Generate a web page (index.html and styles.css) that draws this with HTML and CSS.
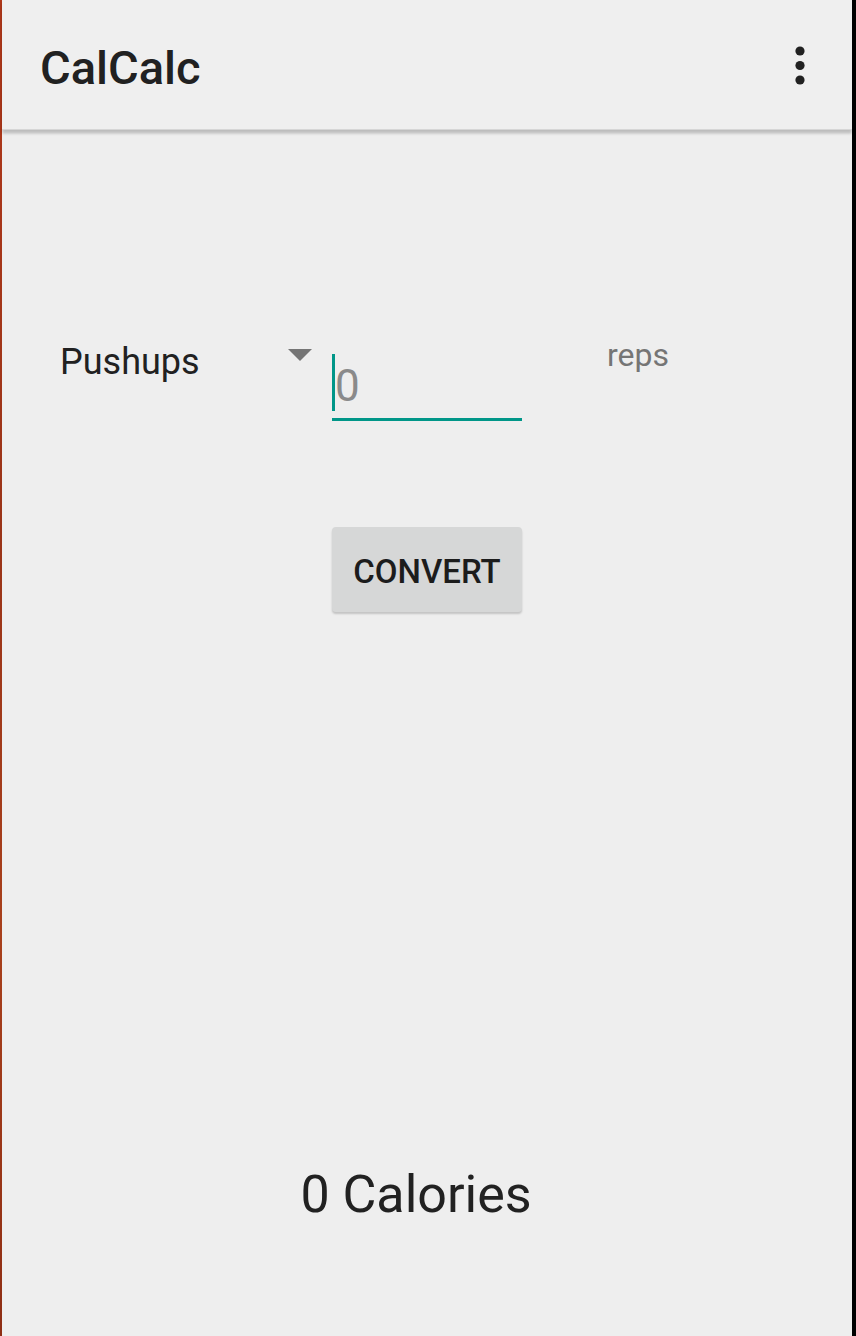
FILE: index.html
```html
<!DOCTYPE html>
<html lang="en">
<head>
<meta charset="utf-8">
<title>CalCalc</title>
<link rel="stylesheet" href="styles.css">
</head>
<body>
<div class="frame">
  <div class="edge-left"></div>
  <main class="screen">
    <header class="appbar">
      <h1 class="title">CalCalc</h1>
      <svg class="overflow" width="10" height="40" viewBox="0 0 10 40" aria-label="More options">
        <circle cx="5" cy="5" r="4.6" fill="#212121"/>
        <circle cx="5" cy="19.5" r="4.6" fill="#212121"/>
        <circle cx="5" cy="34" r="4.6" fill="#212121"/>
      </svg>
    </header>
    <section class="content">
      <div class="row">
        <div class="spinner">
          <span class="spinner-text">Pushups</span>
          <span class="spinner-arrow"></span>
        </div>
        <div class="field">
          <span class="caret"></span>
          <span class="value">0</span>
        </div>
        <span class="unit">reps</span>
      </div>
      <div class="actions">
        <button class="btn" type="button">CONVERT</button>
      </div>
      <p class="result">0 Calories</p>
    </section>
  </main>
  <div class="edge-right"></div>
</div>
</body>
</html>
```

FILE: styles.css
```css
* {
  box-sizing: border-box;
}

html, body {
  margin: 0;
  padding: 0;
  background: #eeeeee;
}

body {
  font-family: Roboto, "Liberation Sans", sans-serif;
  color: #212121;
}

.frame {
  display: flex;
  min-height: 1336px;
}

.edge-left {
  width: 2px;
  flex: 0 0 2px;
  background: linear-gradient(180deg, #b0381a 0%, #9a3418 40%, #a8401c 70%, #8e2e14 100%);
}

.edge-right {
  width: 4px;
  flex: 0 0 4px;
  background: #000;
}

.screen {
  flex: 1;
  display: flex;
  flex-direction: column;
  background: #eeeeee;
}

.appbar {
  height: 130px;
  flex: 0 0 130px;
  background: #efefef;
  display: flex;
  justify-content: space-between;
  align-items: flex-start;
  padding: 0 47px 0 38px;
  border-bottom: 1px solid #d6d6d6;
  box-shadow: 0 3px 3px rgba(0, 0, 0, 0.16), 0 5px 2px -1px rgba(0, 0, 0, 0.06);
  position: relative;
  z-index: 1;
}

.title {
  margin: 40px 0 0 0;
  font-size: 47px;
  line-height: 56px;
  font-weight: 500;
  color: #212121;
}

.overflow {
  margin-top: 46px;
  display: block;
}

.content {
  display: flex;
  flex-direction: column;
  padding: 205px 0 0 58px;
}

.row {
  display: flex;
  align-items: flex-start;
}

.spinner {
  width: 252px;
  display: flex;
  justify-content: space-between;
  align-items: flex-start;
}

.spinner-text {
  margin-top: 6px;
  font-size: 36px;
  line-height: 42px;
  color: #212121;
}

.spinner-arrow {
  margin-top: 14px;
  width: 0;
  height: 0;
  border-left: 12px solid transparent;
  border-right: 12px solid transparent;
  border-top: 12px solid #757575;
}

.field {
  margin: 19px 0 0 20px;
  width: 190px;
  display: flex;
  align-items: flex-start;
  padding-bottom: 6px;
  border-bottom: 3px solid #009688;
}

.caret {
  width: 3px;
  height: 57px;
  background: #009688;
}

.value {
  margin-top: 6px;
  font-size: 44px;
  line-height: 52px;
  color: #8a8a8a;
}

.unit {
  margin: 1px 0 0 85px;
  font-size: 32px;
  line-height: 38px;
  color: #757575;
}

.actions {
  margin-top: 106px;
  padding-left: 272px;
}

.btn {
  width: 190px;
  height: 85px;
  border: none;
  border-radius: 4px;
  background: #d6d7d7;
  box-shadow: 0 2px 2px rgba(0, 0, 0, 0.18);
  font-family: Roboto, "Liberation Sans", sans-serif;
  font-size: 33px;
  font-weight: 500;
  color: #1c1c1c;
  padding: 4px 0 0 0;
  display: flex;
  align-items: center;
  justify-content: center;
}

.result {
  margin: 552px 0 0 -58px;
  padding-right: 22px;
  text-align: center;
  font-size: 52px;
  line-height: 61px;
  color: #212121;
}
```
